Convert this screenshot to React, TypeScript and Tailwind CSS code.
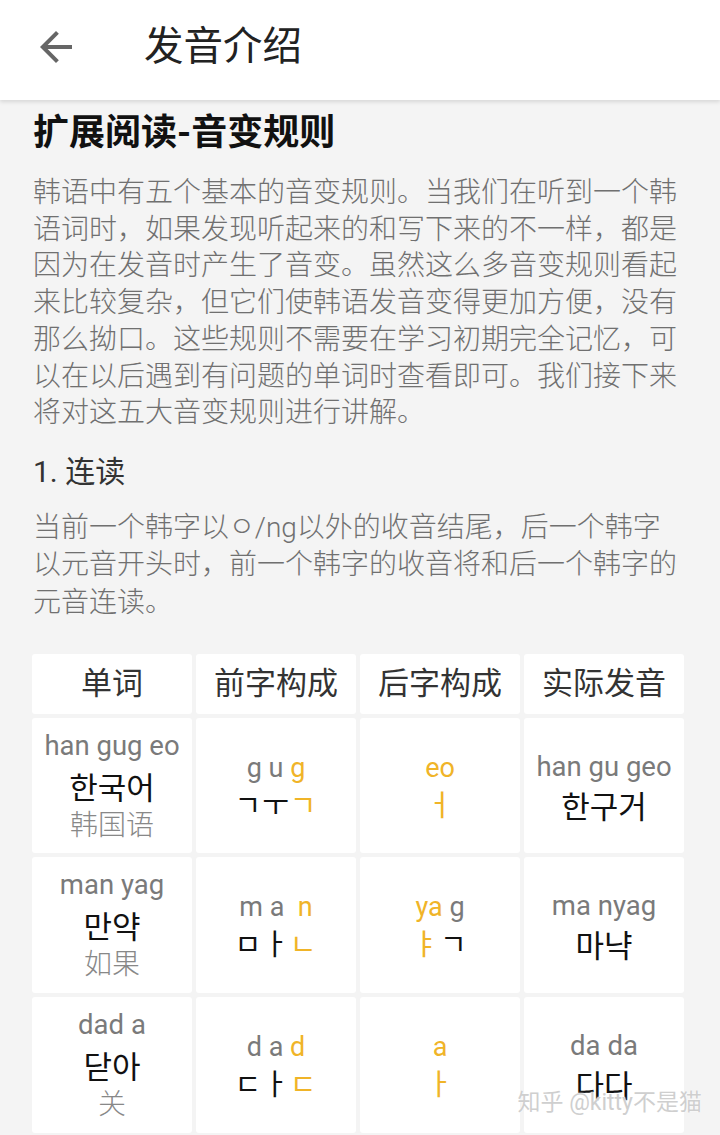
import React from "react";

const Y = ({ children }: { children: React.ReactNode }) => (
  <span className="text-[#f0b428]">{children}</span>
);

function Cell({ children }: { children: React.ReactNode }) {
  return (
    <div className="bg-white rounded-[3px] flex flex-col items-center justify-center">
      {children}
    </div>
  );
}

function WordCell({ rom, ko, zh }: { rom: string; ko: string; zh: string }) {
  return (
    <Cell>
      <div className="text-[27.5px] leading-[40px] text-[#7a7a7a]">{rom}</div>
      <div className="text-[31px] leading-[40px] text-[#111] font-['Noto_Sans_CJK_KR',sans-serif]">{ko}</div>
      <div className="text-[28px] leading-[40px] text-[#888] font-light">{zh}</div>
    </Cell>
  );
}

function PartCell({ rom, jamo }: { rom: React.ReactNode; jamo: React.ReactNode }) {
  return (
    <Cell>
      <div className="text-[27px] leading-[35px] text-[#7a7a7a] whitespace-pre">{rom}</div>
      <div className="text-[29px] leading-[35px] tracking-[1px] text-[#111] font-['Noto_Sans_CJK_KR',sans-serif] whitespace-pre">{jamo}</div>
    </Cell>
  );
}

function ResultCell({ rom, ko }: { rom: string; ko: string }) {
  return (
    <Cell>
      <div className="text-[27.5px] leading-[38px] text-[#7a7a7a]">{rom}</div>
      <div className="text-[31px] leading-[38px] text-[#111] font-['Noto_Sans_CJK_KR',sans-serif]">{ko}</div>
    </Cell>
  );
}

export default function App() {
  return (
    <div className="relative h-[1135px] overflow-hidden bg-[#f4f4f4] font-['Roboto','Noto_Sans_CJK_SC',sans-serif]">
      <header className="relative z-10 h-[100px] bg-white shadow-[0_2px_4px_rgba(0,0,0,0.12)] flex items-center pb-[6px]">
        <svg viewBox="0 0 24 24" className="w-[48px] h-[48px] ml-[32px] fill-[#666]">
          <path d="M20 11H7.83l5.59-5.59L12 4l-8 8 8 8 1.41-1.41L7.83 13H20v-2z" />
        </svg>
        <h1 className="ml-[64px] text-[39.5px] leading-[48px] text-[#222] font-normal">发音介绍</h1>
      </header>

      <main className="px-[33px]">
        <h2 className="mt-[11px] text-[36px] leading-[44px] font-bold text-[#111]">扩展阅读-音变规则</h2>
        <p className="mt-[20px] text-[28px] leading-[36.7px] text-[#707070] font-light">
          韩语中有五个基本的音变规则。当我们在听到一个韩语词时，如果发现听起来的和写下来的不一样，都是因为在发音时产生了音变。虽然这么多音变规则看起来比较复杂，但它们使韩语发音变得更加方便，没有那么拗口。这些规则不需要在学习初期完全记忆，可以在以后遇到有问题的单词时查看即可。我们接下来将对这五大音变规则进行讲解。
        </p>
        <h3 className="mt-[20px] text-[30px] leading-[40px] text-[#333] font-normal">1. 连读</h3>
        <p className="mt-[17px] text-[28px] leading-[37.5px] text-[#707070] font-light">
          当前一个韩字以ㅇ/ng以外的收音结尾，后一个韩字
          <br />
          以元音开头时，前一个韩字的收音将和后一个韩字的
          <br />
          元音连读。
        </p>

        <div className="mt-[33px] -ml-[1px] w-[652px] grid grid-cols-4 gap-[4px] grid-rows-[60px_135px_136px_136px]">
          <div className="bg-white rounded-[3px] flex items-center justify-center text-[31px] text-[#333]">单词</div>
          <div className="bg-white rounded-[3px] flex items-center justify-center text-[31px] text-[#333]">前字构成</div>
          <div className="bg-white rounded-[3px] flex items-center justify-center text-[31px] text-[#333]">后字构成</div>
          <div className="bg-white rounded-[3px] flex items-center justify-center text-[31px] text-[#333]">实际发音</div>

          <WordCell rom="han gug eo" ko="한국어" zh="韩国语" />
          <PartCell rom={<>g u <Y>g</Y></>} jamo={<>ㄱㅜ<Y>ㄱ</Y></>} />
          <PartCell rom={<Y>eo</Y>} jamo={<Y>ㅓ</Y>} />
          <ResultCell rom="han gu geo" ko="한구거" />

          <WordCell rom="man yag" ko="만약" zh="如果" />
          <PartCell rom={<>m a  <Y>n</Y></>} jamo={<>ㅁㅏ<Y>ㄴ</Y></>} />
          <PartCell rom={<><Y>ya</Y> g</>} jamo={<><Y>ㅑ</Y>ㄱ</>} />
          <ResultCell rom="ma nyag" ko="마냑" />

          <WordCell rom="dad a" ko="닫아" zh="关" />
          <PartCell rom={<>d a <Y>d</Y></>} jamo={<>ㄷㅏ<Y>ㄷ</Y></>} />
          <PartCell rom={<Y>a</Y>} jamo={<Y>ㅏ</Y>} />
          <ResultCell rom="da da" ko="다다" />
        </div>
      </main>

      <div className="absolute right-[18px] bottom-[17px] text-[23px] leading-[30px] text-[#cfcfcf] [text-shadow:0_0_2px_#fff,0_0_1px_#fff]">
        知乎 @kitty不是猫
      </div>
    </div>
  );
}
